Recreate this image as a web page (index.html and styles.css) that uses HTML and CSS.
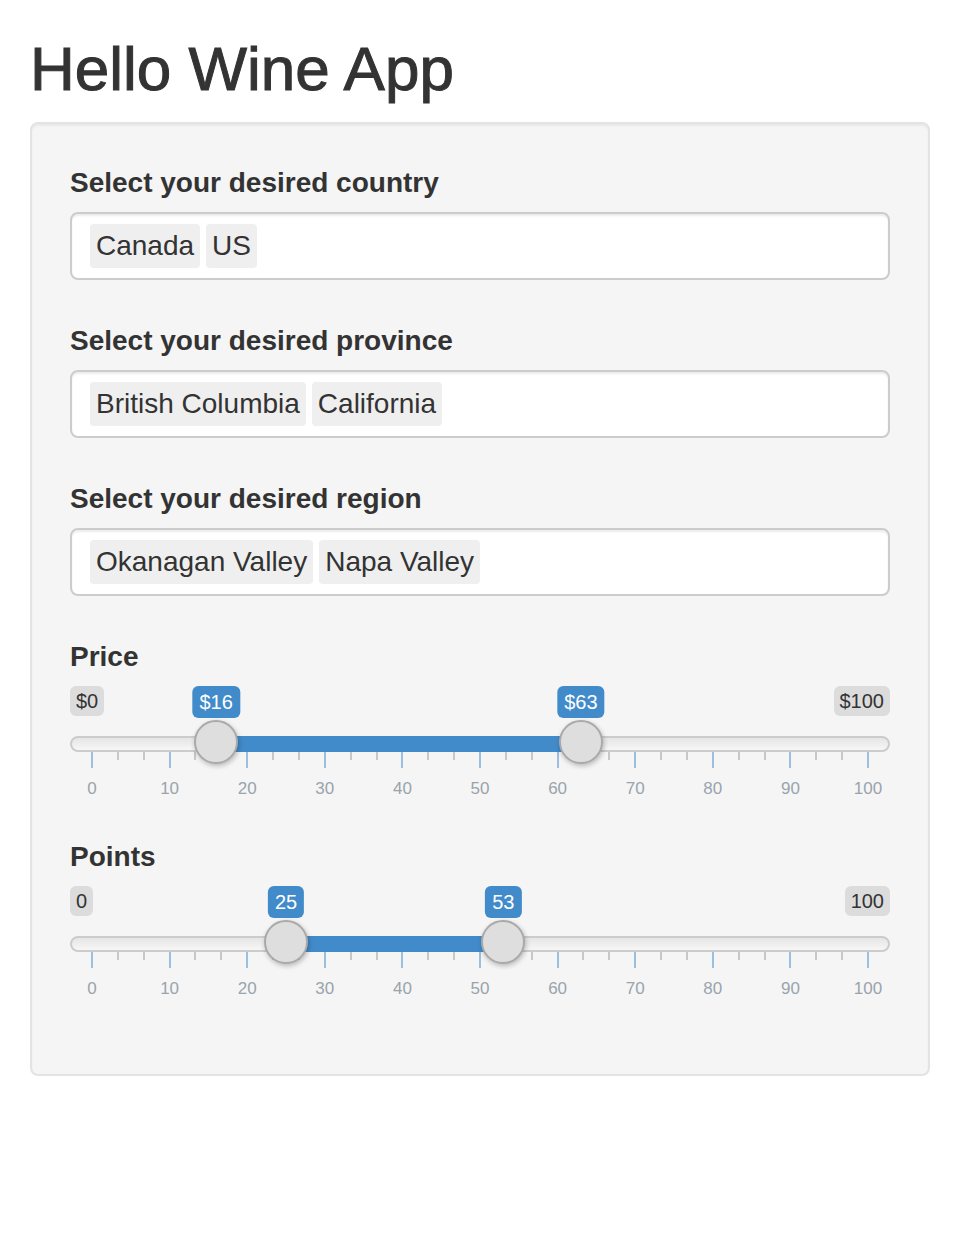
FILE: index.html
```html
<!DOCTYPE html>
<html>
<head>
<meta charset="utf-8">
<title>Hello Wine App</title>
<link rel="stylesheet" href="styles.css">
</head>
<body>
<div class="container">
  <h2 class="title">Hello Wine App</h2>
  <div class="well">
    <div class="form-group">
      <label class="control-label">Select your desired country</label>
      <div class="selectize-input"><div class="item">Canada</div><div class="item">US</div></div>
    </div>
    <div class="form-group">
      <label class="control-label">Select your desired province</label>
      <div class="selectize-input"><div class="item">British Columbia</div><div class="item">California</div></div>
    </div>
    <div class="form-group">
      <label class="control-label">Select your desired region</label>
      <div class="selectize-input"><div class="item">Okanagan Valley</div><div class="item">Napa Valley</div></div>
    </div>

    <div class="form-group slider-group">
      <label class="control-label">Price</label>
      <div class="irs">
        <span class="irs-line"></span>
        <span class="irs-min">$0</span>
        <span class="irs-max">$100</span>
        <div class="irs-area">
          <span class="irs-bar" style="left:16%;width:47%"></span>
          <span class="irs-from" style="left:16%">$16</span>
          <span class="irs-to" style="left:63%">$63</span>
          <span class="irs-handle" style="left:16%"></span>
          <span class="irs-handle" style="left:63%"></span>
          <div class="irs-grid">
            <span class="pol" style="left:0%"></span><span class="pol small" style="left:3.3333%"></span><span class="pol small" style="left:6.6667%"></span>
            <span class="pol" style="left:10%"></span><span class="pol small" style="left:13.3333%"></span><span class="pol small" style="left:16.6667%"></span>
            <span class="pol" style="left:20%"></span><span class="pol small" style="left:23.3333%"></span><span class="pol small" style="left:26.6667%"></span>
            <span class="pol" style="left:30%"></span><span class="pol small" style="left:33.3333%"></span><span class="pol small" style="left:36.6667%"></span>
            <span class="pol" style="left:40%"></span><span class="pol small" style="left:43.3333%"></span><span class="pol small" style="left:46.6667%"></span>
            <span class="pol" style="left:50%"></span><span class="pol small" style="left:53.3333%"></span><span class="pol small" style="left:56.6667%"></span>
            <span class="pol" style="left:60%"></span><span class="pol small" style="left:63.3333%"></span><span class="pol small" style="left:66.6667%"></span>
            <span class="pol" style="left:70%"></span><span class="pol small" style="left:73.3333%"></span><span class="pol small" style="left:76.6667%"></span>
            <span class="pol" style="left:80%"></span><span class="pol small" style="left:83.3333%"></span><span class="pol small" style="left:86.6667%"></span>
            <span class="pol" style="left:90%"></span><span class="pol small" style="left:93.3333%"></span><span class="pol small" style="left:96.6667%"></span>
            <span class="pol" style="left:100%"></span>
            <span class="grid-text" style="left:0%">0</span>
            <span class="grid-text" style="left:10%">10</span>
            <span class="grid-text" style="left:20%">20</span>
            <span class="grid-text" style="left:30%">30</span>
            <span class="grid-text" style="left:40%">40</span>
            <span class="grid-text" style="left:50%">50</span>
            <span class="grid-text" style="left:60%">60</span>
            <span class="grid-text" style="left:70%">70</span>
            <span class="grid-text" style="left:80%">80</span>
            <span class="grid-text" style="left:90%">90</span>
            <span class="grid-text" style="left:100%">100</span>
          </div>
        </div>
      </div>
    </div>

    <div class="form-group slider-group">
      <label class="control-label">Points</label>
      <div class="irs">
        <span class="irs-line"></span>
        <span class="irs-min">0</span>
        <span class="irs-max">100</span>
        <div class="irs-area">
          <span class="irs-bar" style="left:25%;width:28%"></span>
          <span class="irs-from" style="left:25%">25</span>
          <span class="irs-to" style="left:53%">53</span>
          <span class="irs-handle" style="left:25%"></span>
          <span class="irs-handle" style="left:53%"></span>
          <div class="irs-grid">
            <span class="pol" style="left:0%"></span><span class="pol small" style="left:3.3333%"></span><span class="pol small" style="left:6.6667%"></span>
            <span class="pol" style="left:10%"></span><span class="pol small" style="left:13.3333%"></span><span class="pol small" style="left:16.6667%"></span>
            <span class="pol" style="left:20%"></span><span class="pol small" style="left:23.3333%"></span><span class="pol small" style="left:26.6667%"></span>
            <span class="pol" style="left:30%"></span><span class="pol small" style="left:33.3333%"></span><span class="pol small" style="left:36.6667%"></span>
            <span class="pol" style="left:40%"></span><span class="pol small" style="left:43.3333%"></span><span class="pol small" style="left:46.6667%"></span>
            <span class="pol" style="left:50%"></span><span class="pol small" style="left:53.3333%"></span><span class="pol small" style="left:56.6667%"></span>
            <span class="pol" style="left:60%"></span><span class="pol small" style="left:63.3333%"></span><span class="pol small" style="left:66.6667%"></span>
            <span class="pol" style="left:70%"></span><span class="pol small" style="left:73.3333%"></span><span class="pol small" style="left:76.6667%"></span>
            <span class="pol" style="left:80%"></span><span class="pol small" style="left:83.3333%"></span><span class="pol small" style="left:86.6667%"></span>
            <span class="pol" style="left:90%"></span><span class="pol small" style="left:93.3333%"></span><span class="pol small" style="left:96.6667%"></span>
            <span class="pol" style="left:100%"></span>
            <span class="grid-text" style="left:0%">0</span>
            <span class="grid-text" style="left:10%">10</span>
            <span class="grid-text" style="left:20%">20</span>
            <span class="grid-text" style="left:30%">30</span>
            <span class="grid-text" style="left:40%">40</span>
            <span class="grid-text" style="left:50%">50</span>
            <span class="grid-text" style="left:60%">60</span>
            <span class="grid-text" style="left:70%">70</span>
            <span class="grid-text" style="left:80%">80</span>
            <span class="grid-text" style="left:90%">90</span>
            <span class="grid-text" style="left:100%">100</span>
          </div>
        </div>
      </div>
    </div>
  </div>
</div>
</body>
</html>
```
FILE: styles.css
```css
* { box-sizing: border-box; }
html, body {
  margin: 0;
  padding: 0;
  background: #fff;
  font-family: "Liberation Sans", Helvetica, Arial, sans-serif;
  color: #333;
}
.container {
  padding: 0 30px;
}
.title {
  margin: 36px 0 20px 0;
  font-size: 62px;
  line-height: 66px;
  font-weight: 500;
  color: #333;
  -webkit-text-stroke: 1px #333;
}
.well {
  width: 900px;
  background: #f5f5f5;
  border: 2px solid #e3e3e3;
  border-radius: 8px;
  box-shadow: inset 0 2px 2px rgba(0,0,0,0.05);
  padding: 38px;
}
.form-group {
  margin-bottom: 40px;
}
.form-group.slider-group {
  margin-bottom: 30px;
}
.control-label {
  display: block;
  font-size: 28px;
  line-height: 40px;
  font-weight: bold;
  margin-bottom: 10px;
  padding-top: 1px;
  height: 40px;
}
.selectize-input {
  display: flex;
  gap: 6px;
  height: 68px;
  background: #fff;
  border: 2px solid #cccccc;
  border-radius: 8px;
  padding: 10px 18px;
  box-shadow: inset 0 2px 2px rgba(0,0,0,0.075);
}
.selectize-input .item {
  font-size: 28px;
  line-height: 40px;
  padding: 2px 6px;
  background: #efefef;
  border-radius: 4px;
  color: #333;
}
.irs {
  position: relative;
  height: 120px;
}
.irs-line {
  position: absolute;
  left: 0;
  right: 0;
  top: 50px;
  height: 16px;
  border: 2px solid #cccccc;
  border-radius: 16px;
  background: linear-gradient(to bottom, #dddddd -50%, #ffffff 150%);
}
.irs-min, .irs-max {
  position: absolute;
  top: 0;
  font-size: 20px;
  line-height: 26px;
  padding: 2px 6px;
  background: rgba(0,0,0,0.1);
  border-radius: 6px;
  color: #333;
}
.irs-min { left: 0; }
.irs-max { right: 0; }
.irs-area {
  position: absolute;
  top: 0;
  bottom: 0;
  left: 22px;
  right: 22px;
}
.irs-bar {
  position: absolute;
  top: 50px;
  height: 16px;
  background: #428bca;
}
.irs-from, .irs-to {
  position: absolute;
  top: 0;
  transform: translateX(-50%);
  font-size: 20px;
  line-height: 28px;
  padding: 2px 7px;
  background: #428bca;
  color: #fff;
  border-radius: 6px;
  white-space: nowrap;
}
.irs-handle {
  position: absolute;
  top: 34px;
  width: 44px;
  height: 44px;
  margin-left: -22px;
  border: 2px solid #aaaaaa;
  border-radius: 50%;
  background: #dedede;
  box-shadow: 1px 2px 5px rgba(0,0,0,0.25);
  z-index: 2;
}
.irs-grid {
  position: absolute;
  top: 66px;
  left: 0;
  right: 0;
  height: 54px;
}
.pol {
  position: absolute;
  top: 0;
  width: 2px;
  height: 16px;
  margin-left: -1px;
  background: #428bca;
  opacity: 0.5;
}
.pol.small {
  height: 8px;
  background: #c8c8c8;
  opacity: 1;
}
.grid-text {
  position: absolute;
  top: 27px;
  transform: translateX(-50%);
  font-size: 17px;
  line-height: 20px;
  color: #99a4ac;
  white-space: nowrap;
}
```
